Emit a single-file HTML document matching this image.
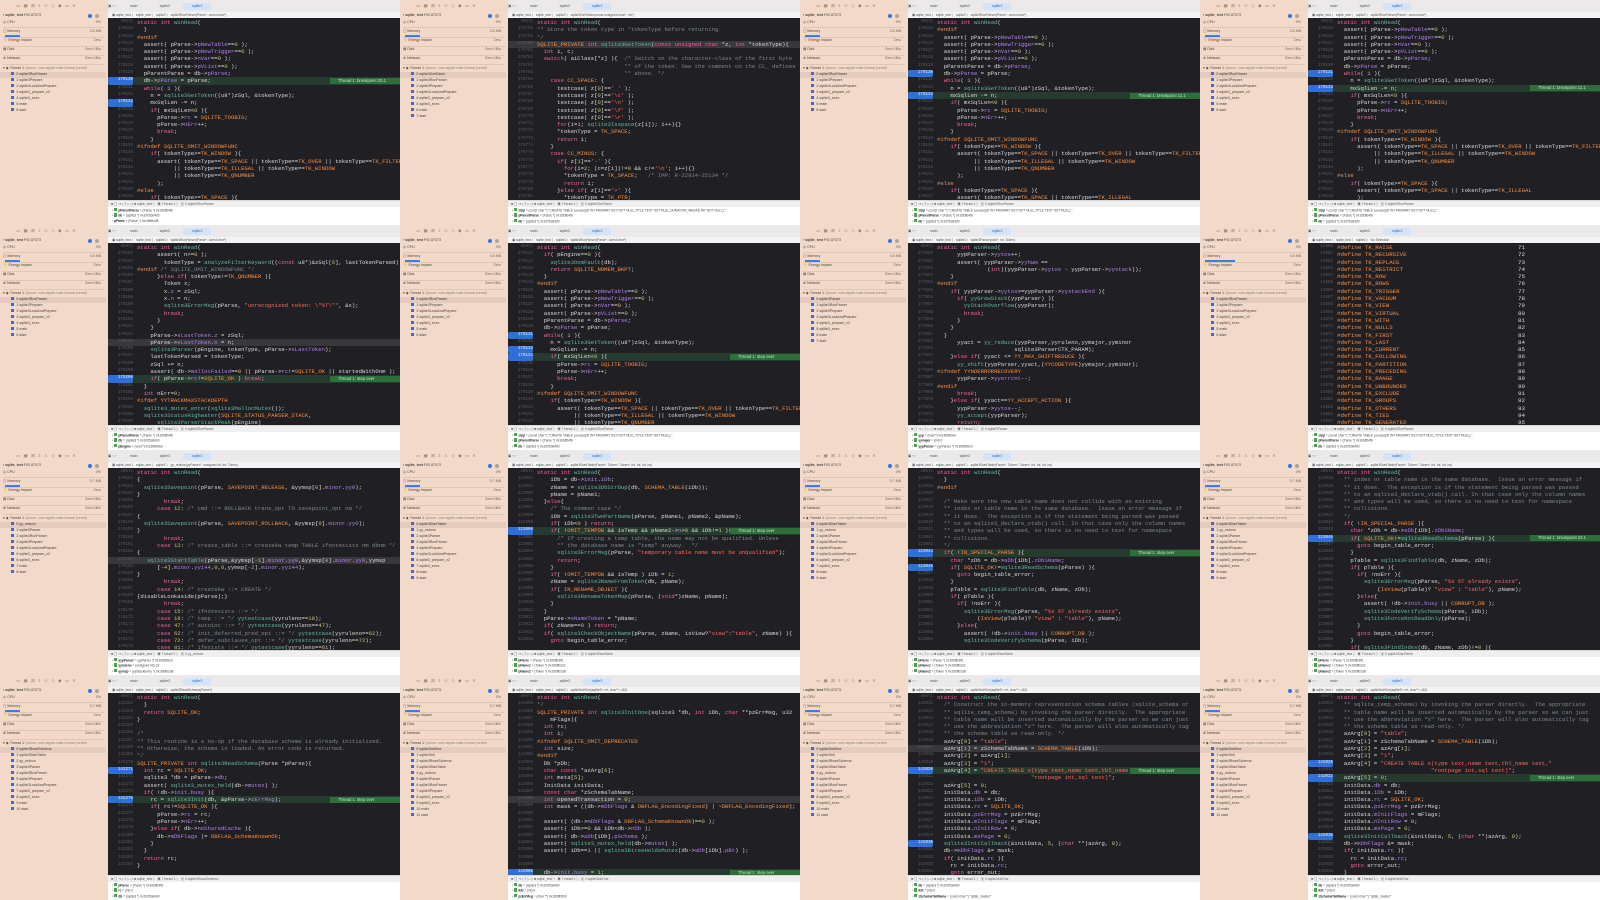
<!DOCTYPE html>
<html><head><meta charset="utf-8"><style>
*{margin:0;padding:0;box-sizing:border-box}
body{width:1600px;height:900px;overflow:hidden;background:#fff;position:relative;font-family:"Liberation Sans",sans-serif}
.t{position:absolute;width:400px;height:225px;overflow:hidden;background:#fff}
.pn{position:absolute;left:0;top:0;width:108px;height:225px;background:#f2d9ca;font:3.6px/5px "Liberation Sans",sans-serif;color:#4a4440}
.ic{position:absolute;left:16px;top:3px;width:76px;font-size:4.4px;color:#8a817c;letter-spacing:3.4px;white-space:nowrap}
.r{position:absolute;left:3px;width:102px;height:6px;white-space:nowrap}
.r span{position:absolute;right:4px;color:#6a625e}
.r em{font-style:normal;color:#8c837e}
.r.rs{background:#e5cbbd;left:0;width:106px;padding-left:11px;color:#3a3430}
.r.rf{padding-left:11px;left:0;color:#4a4440}
.r.rf:before,.r.rs:before{content:"";display:inline-block;width:3.4px;height:3.4px;background:#3a6fd0;margin-right:2px;vertical-align:-0.4px}
.hr{position:absolute;left:3px;width:102px;height:0;border-top:.5px solid #dfc6b8}
.bar{position:absolute;left:5px;top:35px;width:15px;height:2px;background:#3d7de0}
.dot{position:absolute;right:13px;top:1px;width:4px;height:4px;border-radius:50%;background:#3b72d6}
.dot2{position:absolute;right:6px;top:1px;width:4px;height:4px;border-radius:50%;background:#a9a4a2}
.tb{position:absolute;left:108px;top:0;width:292px;height:12px;background:#ebe9e9;font:3.6px/12px "Liberation Sans",sans-serif;color:#555;white-space:nowrap}
.tb i{font-style:normal;display:inline-block;margin-left:4px;padding:0 9px}
.tb .on{background:#d3e3f8;color:#2f6fd0;line-height:7px;border-radius:2px}
.cr{position:absolute;left:108px;top:12px;width:292px;height:6px;background:#f5f4f4;font:3.3px/6px "Liberation Sans",sans-serif;color:#555;padding-left:4px;white-space:nowrap}
.ed{position:absolute;left:108px;top:18px;width:292px;height:182px;background:#1f1f24;font:5.6px/7.3px "Liberation Mono",monospace;color:#dcdcdd;padding-top:1px;overflow:hidden}
.l{height:7.3px;white-space:pre;position:relative}
.l b{display:inline-block;width:25px;text-align:right;color:#5b5b62;font-size:4.2px;margin-right:4px;font-weight:normal;vertical-align:top}
.hl{background:#273a2f}
.sl{background:#37373c}
.hl b,.bp b{background:#2f6fd6;color:#e6efff;border-radius:2px}
.g{position:absolute;left:222px;top:.6px;height:6px;width:90px;background:#2e6e3a;color:#bfe8c6;font:4.2px/6px "Liberation Sans",sans-serif;padding-left:8px}
.k{color:#fc5fa3}.f{color:#67b7a4}.m{color:#fd8f3f}.s{color:#fc6a5d}.n{color:#d0bf69}.c{color:#7d8893}.v{color:#b281eb}
.db{position:absolute;left:108px;top:200px;width:292px;height:7px;background:#efefef;border-top:.5px solid #d8d8d8;font:3.4px/7px "Liberation Sans",sans-serif;color:#666;white-space:nowrap;padding-left:3px}
.co{position:absolute;left:108px;top:207px;width:292px;height:18px;background:#fff;font:3.2px/5px "Liberation Sans",sans-serif;color:#444;padding:1px 0 0 4px;white-space:nowrap}
.co u{text-decoration:none;display:inline-block;width:3.4px;height:3.4px;background:#4ca34c;margin-right:1px}
.co .nm{font-weight:bold;color:#222}
.nr{position:absolute;left:210px;color:#dcdcdd}
</style></head><body>

<!-- ROW 1 -->
<div class="t" style="left:0;top:0">
<div class="pn"><div class="ic">▭▣⊞⌕⚠◇◆▭≡</div>
<div class="r" style="top:13px">▪ <b>sqlite_test</b> PID 87073<i class="dot"></i><i class="dot2"></i></div>
<div class="r" style="top:20px">◎ CPU<span>0%</span></div><div class="hr" style="top:27px"></div>
<div class="r" style="top:29px">▢ Memory<span>3.6 MB</span></div><div class="bar"></div><div class="hr" style="top:37px"></div>
<div class="r" style="top:38px">⚡ Energy Impact<span>Zero</span></div><div class="hr" style="top:46px"></div>
<div class="r" style="top:47px">▤ Disk<span>Zero KB/s</span></div><div class="hr" style="top:55px"></div>
<div class="r" style="top:56px">⊕ Network<span>Zero KB/s</span></div><div class="hr" style="top:64px"></div>
<div class="r" style="top:66px">▾ ◉ Thread 1 <em>Queue: com.apple.main-thread (serial)</em></div>
<div class="r rs" style="top:72px">0 sqlite3RunParser</div><div class="r rf" style="top:78px">1 sqlite3Prepare</div><div class="r rf" style="top:84px">2 sqlite3LockAndPrepare</div><div class="r rf" style="top:90px">3 sqlite3_prepare_v2</div><div class="r rf" style="top:96px">4 sqlite3_exec</div><div class="r rf" style="top:102px">5 main</div><div class="r rf" style="top:108px">6 start</div></div>
<div class="tb">▣ ‹ › <i>main</i><i>sqlite3</i><i class="on">sqlite3</i></div>
<div class="cr">▣ sqlite_test 〉 sqlite_test 〉 sqlite3 〉 sqlite3RunParser(Parse*, const char*)</div>
<div class="ed">
<div class="l"><b>49071</b><span class="k">static int</span> <span class="f">winRead</span>(</div>
<div class="l"><b>179123</b>  }</div>
<div class="l"><b>179124</b><span class="m">#endif</span></div>
<div class="l"><b>179125</b>  assert( pParse-&gt;<span class="v">pNewTable</span>==<span class="n">0</span> );</div>
<div class="l"><b>179126</b>  assert( pParse-&gt;<span class="v">pNewTrigger</span>==<span class="n">0</span> );</div>
<div class="l"><b>179127</b>  assert( pParse-&gt;<span class="v">nVar</span>==<span class="n">0</span> );</div>
<div class="l"><b>179128</b>  assert( pParse-&gt;<span class="v">pVList</span>==<span class="n">0</span> );</div>
<div class="l"><b>179129</b>  pParentParse = db-&gt;<span class="v">pParse</span>;</div>
<div class="l hl"><b>179130</b>  db-&gt;<span class="v">pParse</span> = pParse;<span class="g">Thread 1: breakpoint 20.1</span></div>
<div class="l"><b>179131</b>  <span class="k">while</span>( <span class="n">1</span> ){</div>
<div class="l"><b>179132</b>    n = <span class="f">sqlite3GetToken</span>((u8*)zSql, &amp;tokenType);</div>
<div class="l bp"><b>179133</b>    mxSqlLen -= n;</div>
<div class="l"><b>179134</b>    <span class="k">if</span>( mxSqlLen&lt;<span class="n">0</span> ){</div>
<div class="l"><b>179135</b>      pParse-&gt;<span class="v">rc</span> = <span class="m">SQLITE_TOOBIG</span>;</div>
<div class="l"><b>179136</b>      pParse-&gt;<span class="v">nErr</span>++;</div>
<div class="l"><b>179137</b>      <span class="k">break</span>;</div>
<div class="l"><b>179138</b>    }</div>
<div class="l"><b>179139</b><span class="m">#ifndef SQLITE_OMIT_WINDOWFUNC</span></div>
<div class="l"><b>179140</b>    <span class="k">if</span>( tokenType&gt;=<span class="m">TK_WINDOW</span> ){</div>
<div class="l"><b>179141</b>      assert( tokenType==<span class="m">TK_SPACE</span> || tokenType==<span class="m">TK_OVER</span> || tokenType==<span class="m">TK_FILTER</span></div>
<div class="l"><b>179142</b>           || tokenType==<span class="m">TK_ILLEGAL</span> || tokenType==<span class="m">TK_WINDOW</span></div>
<div class="l"><b>179143</b>           || tokenType==<span class="m">TK_QNUMBER</span></div>
<div class="l"><b>179144</b>      );</div>
<div class="l"><b>179145</b><span class="m">#else</span></div>
<div class="l"><b>179146</b>    <span class="k">if</span>( tokenType&gt;=<span class="m">TK_SPACE</span> ){</div>
</div>
<div class="db">■ ▢ ⇥ ⤓ ⤒ ▷ ◇ ■ sqlite_test 〉 ◉ Thread 1 〉 ▣ 0 sqlite3RunParser</div>
<div class="co">› <u></u><span class="nm">pParentParse</span> = (Parse *) 0x16fdfb4f8<br>› <u></u><span class="nm">db</span> = (sqlite3 *) 0x10053d400<br>› <span class="nm">pParse</span> = (Parse *) 0x16fdfb4f8</div>
</div>

<div class="t" style="left:400px;top:0">
<div class="pn"><div class="ic">▭▣⊞⌕⚠◇◆▭≡</div>
<div class="r" style="top:13px">▪ <b>sqlite_test</b> PID 87073<i class="dot"></i><i class="dot2"></i></div>
<div class="r" style="top:20px">◎ CPU<span>0%</span></div><div class="hr" style="top:27px"></div>
<div class="r" style="top:29px">▢ Memory<span>3.6 MB</span></div><div class="bar"></div><div class="hr" style="top:37px"></div>
<div class="r" style="top:38px">⚡ Energy Impact<span>Zero</span></div><div class="hr" style="top:46px"></div>
<div class="r" style="top:47px">▤ Disk<span>Zero KB/s</span></div><div class="hr" style="top:55px"></div>
<div class="r" style="top:56px">⊕ Network<span>Zero KB/s</span></div><div class="hr" style="top:64px"></div>
<div class="r" style="top:66px">▾ ◉ Thread 1 <em>Queue: com.apple.main-thread (serial)</em></div>
<div class="r rs" style="top:72px">0 sqlite3GetToken</div><div class="r rf" style="top:78px">1 sqlite3RunParser</div><div class="r rf" style="top:84px">2 sqlite3Prepare</div><div class="r rf" style="top:90px">3 sqlite3LockAndPrepare</div><div class="r rf" style="top:96px">4 sqlite3_prepare_v2</div><div class="r rf" style="top:102px">5 sqlite3_exec</div><div class="r rf" style="top:108px">6 main</div><div class="r rf" style="top:114px">7 start</div></div>
<div class="tb">▣ ‹ › <i>main</i><i>sqlite3</i><i class="on">sqlite3</i></div>
<div class="cr">▣ sqlite_test 〉 sqlite_test 〉 sqlite3 〉 sqlite3GetToken(const unsigned char*, int*)</div>
<div class="ed">
<div class="l"><b>49071</b><span class="k">static int</span> <span class="f">winRead</span>(</div>
<div class="l"><b>178758</b><span class="c">** Store the token type in *tokenType before returning.</span></div>
<div class="l"><b>178759</b><span class="c">*/</span></div>
<div class="l sl"><b>178760</b><span class="m">SQLITE_PRIVATE</span> <span class="k">int</span> <span class="f">sqlite3GetToken</span>(<span class="k">const unsigned char</span> *z, <span class="k">int</span> *tokenType){</div>
<div class="l"><b>178761</b>  <span class="k">int</span> i, c;</div>
<div class="l"><b>178762</b>  <span class="k">switch</span>( aiClass[*z] ){  <span class="c">/* Switch on the character-class of the first byte</span></div>
<div class="l"><b>178763</b>                          <span class="c">** of the token. See the comment on the CC_ defines</span></div>
<div class="l"><b>178764</b>                          <span class="c">** above. */</span></div>
<div class="l"><b>178765</b>    <span class="k">case</span> <span class="m">CC_SPACE</span>: {</div>
<div class="l"><b>178766</b>      testcase( z[<span class="n">0</span>]==<span class="s">' '</span> );</div>
<div class="l"><b>178767</b>      testcase( z[<span class="n">0</span>]==<span class="s">'\t'</span> );</div>
<div class="l"><b>178768</b>      testcase( z[<span class="n">0</span>]==<span class="s">'\n'</span> );</div>
<div class="l"><b>178769</b>      testcase( z[<span class="n">0</span>]==<span class="s">'\f'</span> );</div>
<div class="l"><b>178770</b>      testcase( z[<span class="n">0</span>]==<span class="s">'\r'</span> );</div>
<div class="l"><b>178771</b>      <span class="k">for</span>(i=<span class="n">1</span>; <span class="f">sqlite3Isspace</span>(z[i]); i++){}</div>
<div class="l"><b>178772</b>      *tokenType = <span class="m">TK_SPACE</span>;</div>
<div class="l"><b>178773</b>      <span class="k">return</span> i;</div>
<div class="l"><b>178774</b>    }</div>
<div class="l"><b>178775</b>    <span class="k">case</span> <span class="m">CC_MINUS</span>: {</div>
<div class="l"><b>178776</b>      <span class="k">if</span>( z[<span class="n">1</span>]==<span class="s">'-'</span> ){</div>
<div class="l"><b>178777</b>        <span class="k">for</span>(i=<span class="n">2</span>; (c=z[i])!=<span class="n">0</span> &amp;&amp; c!=<span class="s">'\n'</span>; i++){}</div>
<div class="l"><b>178778</b>        *tokenType = <span class="m">TK_SPACE</span>;   <span class="c">/* IMP: R-22934-25134 */</span></div>
<div class="l"><b>178779</b>        <span class="k">return</span> i;</div>
<div class="l"><b>178780</b>      }<span class="k">else if</span>( z[<span class="n">1</span>]==<span class="s">'&gt;'</span> ){</div>
<div class="l"><b>178781</b>        *tokenType = <span class="m">TK_PTR</span>;</div>
</div>
<div class="db">■ ▢ ⇥ ⤓ ⤒ ▷ ◇ ■ sqlite_test 〉 ◉ Thread 1 〉 ▣ 0 sqlite3GetToken</div>
<div class="co">› <u></u><span class="nm">zSql</span> = (const char *) "CREATE TABLE courses(ID INT PRIMARY KEY NOT NULL,TITLE TEXT NOT NULL,DURATION_WEEKS INT NOT NULL);"<br>› <u></u><span class="nm">pParentParse</span> = (Parse *) 0x16fdfb4f8<br>› <u></u><span class="nm">db</span> = (sqlite3 *) 0x10053d400</div>
</div>

<div class="t" style="left:800px;top:0">
<div class="pn"><div class="ic">▭▣⊞⌕⚠◇◆▭≡</div>
<div class="r" style="top:13px">▪ <b>sqlite_test</b> PID 87073<i class="dot"></i><i class="dot2"></i></div>
<div class="r" style="top:20px">◎ CPU<span>0%</span></div><div class="hr" style="top:27px"></div>
<div class="r" style="top:29px">▢ Memory<span>3.6 MB</span></div><div class="bar"></div><div class="hr" style="top:37px"></div>
<div class="r" style="top:38px">⚡ Energy Impact<span>Zero</span></div><div class="hr" style="top:46px"></div>
<div class="r" style="top:47px">▤ Disk<span>Zero KB/s</span></div><div class="hr" style="top:55px"></div>
<div class="r" style="top:56px">⊕ Network<span>Zero KB/s</span></div><div class="hr" style="top:64px"></div>
<div class="r" style="top:66px">▾ ◉ Thread 1 <em>Queue: com.apple.main-thread (serial)</em></div>
<div class="r rs" style="top:72px">0 sqlite3RunParser</div><div class="r rf" style="top:78px">1 sqlite3Prepare</div><div class="r rf" style="top:84px">2 sqlite3LockAndPrepare</div><div class="r rf" style="top:90px">3 sqlite3_prepare_v2</div><div class="r rf" style="top:96px">4 sqlite3_exec</div><div class="r rf" style="top:102px">5 main</div><div class="r rf" style="top:108px">6 start</div></div>
<div class="tb">▣ ‹ › <i>main</i><i>sqlite3</i><i class="on">sqlite3</i></div>
<div class="cr">▣ sqlite_test 〉 sqlite_test 〉 sqlite3 〉 sqlite3RunParser(Parse*, const char*)</div>
<div class="ed">
<div class="l"><b>49071</b><span class="k">static int</span> <span class="f">winRead</span>(</div>
<div class="l"><b>179124</b><span class="m">#endif</span></div>
<div class="l"><b>179125</b>  assert( pParse-&gt;<span class="v">pNewTable</span>==<span class="n">0</span> );</div>
<div class="l"><b>179126</b>  assert( pParse-&gt;<span class="v">pNewTrigger</span>==<span class="n">0</span> );</div>
<div class="l"><b>179127</b>  assert( pParse-&gt;<span class="v">nVar</span>==<span class="n">0</span> );</div>
<div class="l"><b>179128</b>  assert( pParse-&gt;<span class="v">pVList</span>==<span class="n">0</span> );</div>
<div class="l"><b>179129</b>  pParentParse = db-&gt;<span class="v">pParse</span>;</div>
<div class="l bp"><b>179130</b>  db-&gt;<span class="v">pParse</span> = pParse;</div>
<div class="l"><b>179131</b>  <span class="k">while</span>( <span class="n">1</span> ){</div>
<div class="l"><b>179132</b>    n = <span class="f">sqlite3GetToken</span>((u8*)zSql, &amp;tokenType);</div>
<div class="l hl"><b>179133</b>    mxSqlLen -= n;<span class="g">Thread 1: breakpoint 11.1</span></div>
<div class="l"><b>179134</b>    <span class="k">if</span>( mxSqlLen&lt;<span class="n">0</span> ){</div>
<div class="l"><b>179135</b>      pParse-&gt;<span class="v">rc</span> = <span class="m">SQLITE_TOOBIG</span>;</div>
<div class="l"><b>179136</b>      pParse-&gt;<span class="v">nErr</span>++;</div>
<div class="l"><b>179137</b>      <span class="k">break</span>;</div>
<div class="l"><b>179138</b>    }</div>
<div class="l"><b>179139</b><span class="m">#ifndef SQLITE_OMIT_WINDOWFUNC</span></div>
<div class="l"><b>179140</b>    <span class="k">if</span>( tokenType&gt;=<span class="m">TK_WINDOW</span> ){</div>
<div class="l"><b>179141</b>      assert( tokenType==<span class="m">TK_SPACE</span> || tokenType==<span class="m">TK_OVER</span> || tokenType==<span class="m">TK_FILTER</span></div>
<div class="l"><b>179142</b>           || tokenType==<span class="m">TK_ILLEGAL</span> || tokenType==<span class="m">TK_WINDOW</span></div>
<div class="l"><b>179143</b>           || tokenType==<span class="m">TK_QNUMBER</span></div>
<div class="l"><b>179144</b>      );</div>
<div class="l"><b>179145</b><span class="m">#else</span></div>
<div class="l"><b>179146</b>    <span class="k">if</span>( tokenType&gt;=<span class="m">TK_SPACE</span> ){</div>
<div class="l"><b>179147</b>      assert( tokenType==<span class="m">TK_SPACE</span> || tokenType==<span class="m">TK_ILLEGAL</span></div>
</div>
<div class="db">■ ▢ ⇥ ⤓ ⤒ ▷ ◇ ■ sqlite_test 〉 ◉ Thread 1 〉 ▣ 0 sqlite3RunParser</div>
<div class="co">› <u></u><span class="nm">zSql</span> = (const char *) "CREATE TABLE courses(ID INT PRIMARY KEY NOT NULL,TITLE TEXT NOT NULL);"<br>› <u></u><span class="nm">pParentParse</span> = (Parse *) 0x16fdfb4f8<br>› <u></u><span class="nm">db</span> = (sqlite3 *) 0x10053d400</div>
</div>

<div class="t" style="left:1200px;top:0">
<div class="pn"><div class="ic">▭▣⊞⌕⚠◇◆▭≡</div>
<div class="r" style="top:13px">▪ <b>sqlite_test</b> PID 87073<i class="dot"></i><i class="dot2"></i></div>
<div class="r" style="top:20px">◎ CPU<span>0%</span></div><div class="hr" style="top:27px"></div>
<div class="r" style="top:29px">▢ Memory<span>3.6 MB</span></div><div class="bar"></div><div class="hr" style="top:37px"></div>
<div class="r" style="top:38px">⚡ Energy Impact<span>Zero</span></div><div class="hr" style="top:46px"></div>
<div class="r" style="top:47px">▤ Disk<span>Zero KB/s</span></div><div class="hr" style="top:55px"></div>
<div class="r" style="top:56px">⊕ Network<span>Zero KB/s</span></div><div class="hr" style="top:64px"></div>
<div class="r" style="top:66px">▾ ◉ Thread 1 <em>Queue: com.apple.main-thread (serial)</em></div>
<div class="r rs" style="top:72px">0 sqlite3RunParser</div><div class="r rf" style="top:78px">1 sqlite3Prepare</div><div class="r rf" style="top:84px">2 sqlite3LockAndPrepare</div><div class="r rf" style="top:90px">3 sqlite3_prepare_v2</div><div class="r rf" style="top:96px">4 sqlite3_exec</div><div class="r rf" style="top:102px">5 main</div><div class="r rf" style="top:108px">6 start</div></div>
<div class="tb">▣ ‹ › <i>main</i><i>sqlite3</i><i class="on">sqlite3</i></div>
<div class="cr">▣ sqlite_test 〉 sqlite_test 〉 sqlite3 〉 sqlite3RunParser(Parse*, const char*)</div>
<div class="ed">
<div class="l"><b>49071</b><span class="k">static int</span> <span class="f">winRead</span>(</div>
<div class="l"><b>179125</b>  assert( pParse-&gt;<span class="v">pNewTable</span>==<span class="n">0</span> );</div>
<div class="l"><b>179126</b>  assert( pParse-&gt;<span class="v">pNewTrigger</span>==<span class="n">0</span> );</div>
<div class="l"><b>179127</b>  assert( pParse-&gt;<span class="v">nVar</span>==<span class="n">0</span> );</div>
<div class="l"><b>179128</b>  assert( pParse-&gt;<span class="v">pVList</span>==<span class="n">0</span> );</div>
<div class="l"><b>179129</b>  pParentParse = db-&gt;<span class="v">pParse</span>;</div>
<div class="l"><b>179130</b>  db-&gt;<span class="v">pParse</span> = pParse;</div>
<div class="l bp"><b>179131</b>  <span class="k">while</span>( <span class="n">1</span> ){</div>
<div class="l"><b>179132</b>    n = <span class="f">sqlite3GetToken</span>((u8*)zSql, &amp;tokenType);</div>
<div class="l hl"><b>179133</b>    mxSqlLen -= n;<span class="g">Thread 1: breakpoint 11.1</span></div>
<div class="l"><b>179134</b>    <span class="k">if</span>( mxSqlLen&lt;<span class="n">0</span> ){</div>
<div class="l"><b>179135</b>      pParse-&gt;<span class="v">rc</span> = <span class="m">SQLITE_TOOBIG</span>;</div>
<div class="l"><b>179136</b>      pParse-&gt;<span class="v">nErr</span>++;</div>
<div class="l"><b>179137</b>      <span class="k">break</span>;</div>
<div class="l"><b>179138</b>    }</div>
<div class="l"><b>179139</b><span class="m">#ifndef SQLITE_OMIT_WINDOWFUNC</span></div>
<div class="l"><b>179140</b>    <span class="k">if</span>( tokenType&gt;=<span class="m">TK_WINDOW</span> ){</div>
<div class="l"><b>179141</b>      assert( tokenType==<span class="m">TK_SPACE</span> || tokenType==<span class="m">TK_OVER</span> || tokenType==<span class="m">TK_FILTER</span></div>
<div class="l"><b>179142</b>           || tokenType==<span class="m">TK_ILLEGAL</span> || tokenType==<span class="m">TK_WINDOW</span></div>
<div class="l"><b>179143</b>           || tokenType==<span class="m">TK_QNUMBER</span></div>
<div class="l"><b>179144</b>      );</div>
<div class="l"><b>179145</b><span class="m">#else</span></div>
<div class="l"><b>179146</b>    <span class="k">if</span>( tokenType&gt;=<span class="m">TK_SPACE</span> ){</div>
<div class="l"><b>179147</b>      assert( tokenType==<span class="m">TK_SPACE</span> || tokenType==<span class="m">TK_ILLEGAL</span></div>
<div class="l"><b>179148</b>      );</div>
</div>
<div class="db">■ ▢ ⇥ ⤓ ⤒ ▷ ◇ ■ sqlite_test 〉 ◉ Thread 1 〉 ▣ 0 sqlite3RunParser</div>
<div class="co">› <u></u><span class="nm">zSql</span> = (const char *) "CREATE TABLE courses(ID INT PRIMARY KEY NOT NULL);"<br>› <u></u><span class="nm">pParentParse</span> = (Parse *) 0x16fdfb4f8<br>› <u></u><span class="nm">db</span> = (sqlite3 *) 0x10053d400</div>
</div>

<!-- ROW 2 -->
<div class="t" style="left:0;top:225px">
<div class="pn"><div class="ic">▭▣⊞⌕⚠◇◆▭≡</div>
<div class="r" style="top:13px">▪ <b>sqlite_test</b> PID 87073<i class="dot"></i><i class="dot2"></i></div>
<div class="r" style="top:20px">◎ CPU<span>0%</span></div><div class="hr" style="top:27px"></div>
<div class="r" style="top:29px">▢ Memory<span>3.6 MB</span></div><div class="bar"></div><div class="hr" style="top:37px"></div>
<div class="r" style="top:38px">⚡ Energy Impact<span>Zero</span></div><div class="hr" style="top:46px"></div>
<div class="r" style="top:47px">▤ Disk<span>Zero KB/s</span></div><div class="hr" style="top:55px"></div>
<div class="r" style="top:56px">⊕ Network<span>Zero KB/s</span></div><div class="hr" style="top:64px"></div>
<div class="r" style="top:66px">▾ ◉ Thread 1 <em>Queue: com.apple.main-thread (serial)</em></div>
<div class="r rs" style="top:72px">0 sqlite3RunParser</div><div class="r rf" style="top:78px">1 sqlite3Prepare</div><div class="r rf" style="top:84px">2 sqlite3LockAndPrepare</div><div class="r rf" style="top:90px">3 sqlite3_prepare_v2</div><div class="r rf" style="top:96px">4 sqlite3_exec</div><div class="r rf" style="top:102px">5 main</div><div class="r rf" style="top:108px">6 start</div></div>
<div class="tb">▣ ‹ › <i>main</i><i>sqlite3</i><i class="on">sqlite3</i></div>
<div class="cr">▣ sqlite_test 〉 sqlite_test 〉 sqlite3 〉 sqlite3RunParser(Parse*, const char*)</div>
<div class="ed">
<div class="l"><b>49071</b><span class="k">static int</span> <span class="f">winRead</span>(</div>
<div class="l"><b>179183</b>      assert( n&gt;=<span class="n">0</span> );</div>
<div class="l"><b>179184</b>        tokenType = <span class="f">analyzeFilterKeyword</span>((<span class="k">const</span> u8*)&amp;zSql[<span class="n">6</span>], lastTokenParsed);</div>
<div class="l"><b>179185</b><span class="m">#endif</span> <span class="c">/* SQLITE_OMIT_WINDOWFUNC */</span></div>
<div class="l"><b>179186</b>      }<span class="k">else if</span>( tokenType!=<span class="m">TK_QNUMBER</span> ){</div>
<div class="l"><b>179187</b>        Token x;</div>
<div class="l"><b>179188</b>        x.<span class="v">z</span> = zSql;</div>
<div class="l"><b>179189</b>        x.<span class="v">n</span> = n;</div>
<div class="l"><b>179190</b>        <span class="f">sqlite3ErrorMsg</span>(pParse, <span class="s">"unrecognized token: \"%T\""</span>, &amp;x);</div>
<div class="l"><b>179191</b>        <span class="k">break</span>;</div>
<div class="l"><b>179192</b>      }</div>
<div class="l"><b>179193</b>    }</div>
<div class="l"><b>179194</b>    pParse-&gt;<span class="v">sLastToken</span>.<span class="v">z</span> = zSql;</div>
<div class="l sl"><b>179195</b>    pParse-&gt;<span class="v">sLastToken</span>.<span class="v">n</span> = n;</div>
<div class="l"><b>179196</b>    <span class="f">sqlite3Parser</span>(pEngine, tokenType, pParse-&gt;<span class="v">sLastToken</span>);</div>
<div class="l"><b>179197</b>    lastTokenParsed = tokenType;</div>
<div class="l"><b>179198</b>    zSql += n;</div>
<div class="l"><b>179199</b>    assert( db-&gt;<span class="v">mallocFailed</span>==<span class="n">0</span> || pParse-&gt;<span class="v">rc</span>!=<span class="m">SQLITE_OK</span> || startedWithOom );</div>
<div class="l hl"><b>179200</b>    <span class="k">if</span>( pParse-&gt;<span class="v">rc</span>!=<span class="m">SQLITE_OK</span> ) <span class="k">break</span>;<span class="g">Thread 1: step over</span></div>
<div class="l"><b>179201</b>  }</div>
<div class="l"><b>179202</b>  <span class="k">int</span> nErr=<span class="n">0</span>;</div>
<div class="l"><b>179203</b><span class="m">#ifdef YYTRACKMAXSTACKDEPTH</span></div>
<div class="l"><b>179204</b>  <span class="f">sqlite3_mutex_enter</span>(<span class="f">sqlite3MallocMutex</span>());</div>
<div class="l"><b>179205</b>  <span class="f">sqlite3StatusHighwater</span>(<span class="m">SQLITE_STATUS_PARSER_STACK</span>,</div>
<div class="l"><b>179206</b>      <span class="f">sqlite3ParserStackPeak</span>(pEngine)</div>
</div>
<div class="db">■ ▢ ⇥ ⤓ ⤒ ▷ ◇ ■ sqlite_test 〉 ◉ Thread 1 〉 ▣ 0 sqlite3RunParser</div>
<div class="co">› <u></u><span class="nm">pParentParse</span> = (Parse *) 0x16fdfb4f8<br>› <u></u><span class="nm">db</span> = (sqlite3 *) 0x10053d400<br>› <u></u><span class="nm">pEngine</span> = (void *) 0x16fdfb0e0</div>
</div>

<div class="t" style="left:400px;top:225px">
<div class="pn"><div class="ic">▭▣⊞⌕⚠◇◆▭≡</div>
<div class="r" style="top:13px">▪ <b>sqlite_test</b> PID 87073<i class="dot"></i><i class="dot2"></i></div>
<div class="r" style="top:20px">◎ CPU<span>0%</span></div><div class="hr" style="top:27px"></div>
<div class="r" style="top:29px">▢ Memory<span>3.6 MB</span></div><div class="bar"></div><div class="hr" style="top:37px"></div>
<div class="r" style="top:38px">⚡ Energy Impact<span>Zero</span></div><div class="hr" style="top:46px"></div>
<div class="r" style="top:47px">▤ Disk<span>Zero KB/s</span></div><div class="hr" style="top:55px"></div>
<div class="r" style="top:56px">⊕ Network<span>Zero KB/s</span></div><div class="hr" style="top:64px"></div>
<div class="r" style="top:66px">▾ ◉ Thread 1 <em>Queue: com.apple.main-thread (serial)</em></div>
<div class="r rs" style="top:72px">0 sqlite3RunParser</div><div class="r rf" style="top:78px">1 sqlite3Prepare</div><div class="r rf" style="top:84px">2 sqlite3LockAndPrepare</div><div class="r rf" style="top:90px">3 sqlite3_prepare_v2</div><div class="r rf" style="top:96px">4 sqlite3_exec</div><div class="r rf" style="top:102px">5 main</div><div class="r rf" style="top:108px">6 start</div></div>
<div class="tb">▣ ‹ › <i>main</i><i>sqlite3</i><i class="on">sqlite3</i></div>
<div class="cr">▣ sqlite_test 〉 sqlite_test 〉 sqlite3 〉 sqlite3RunParser(Parse*, const char*)</div>
<div class="ed">
<div class="l"><b>49071</b><span class="k">static int</span> <span class="f">winRead</span>(</div>
<div class="l"><b>179112</b>  <span class="k">if</span>( pEngine==<span class="n">0</span> ){</div>
<div class="l"><b>179113</b>    <span class="f">sqlite3OomFault</span>(db);</div>
<div class="l"><b>179114</b>    <span class="k">return</span> <span class="m">SQLITE_NOMEM_BKPT</span>;</div>
<div class="l"><b>179115</b>  }</div>
<div class="l"><b>179116</b><span class="m">#endif</span></div>
<div class="l"><b>179125</b>  assert( pParse-&gt;<span class="v">pNewTable</span>==<span class="n">0</span> );</div>
<div class="l"><b>179126</b>  assert( pParse-&gt;<span class="v">pNewTrigger</span>==<span class="n">0</span> );</div>
<div class="l"><b>179127</b>  assert( pParse-&gt;<span class="v">nVar</span>==<span class="n">0</span> );</div>
<div class="l"><b>179128</b>  assert( pParse-&gt;<span class="v">pVList</span>==<span class="n">0</span> );</div>
<div class="l"><b>179129</b>  pParentParse = db-&gt;<span class="v">pParse</span>;</div>
<div class="l"><b>179130</b>  db-&gt;<span class="v">pParse</span> = pParse;</div>
<div class="l bp"><b>179131</b>  <span class="k">while</span>( <span class="n">1</span> ){</div>
<div class="l"><b>179132</b>    n = <span class="f">sqlite3GetToken</span>((u8*)zSql, &amp;tokenType);</div>
<div class="l bp"><b>179133</b>    mxSqlLen -= n;</div>
<div class="l hl"><b>179134</b>    <span class="k">if</span>( mxSqlLen&lt;<span class="n">0</span> ){<span class="g">Thread 1: step over</span></div>
<div class="l"><b>179135</b>      pParse-&gt;<span class="v">rc</span> = <span class="m">SQLITE_TOOBIG</span>;</div>
<div class="l"><b>179136</b>      pParse-&gt;<span class="v">nErr</span>++;</div>
<div class="l"><b>179137</b>      <span class="k">break</span>;</div>
<div class="l"><b>179138</b>    }</div>
<div class="l"><b>179139</b><span class="m">#ifndef SQLITE_OMIT_WINDOWFUNC</span></div>
<div class="l"><b>179140</b>    <span class="k">if</span>( tokenType&gt;=<span class="m">TK_WINDOW</span> ){</div>
<div class="l"><b>179141</b>      assert( tokenType==<span class="m">TK_SPACE</span> || tokenType==<span class="m">TK_OVER</span> || tokenType==<span class="m">TK_FILTER</span></div>
<div class="l"><b>179142</b>           || tokenType==<span class="m">TK_ILLEGAL</span> || tokenType==<span class="m">TK_WINDOW</span></div>
<div class="l"><b>179143</b>           || tokenType==<span class="m">TK_QNUMBER</span></div>
</div>
<div class="db">■ ▢ ⇥ ⤓ ⤒ ▷ ◇ ■ sqlite_test 〉 ◉ Thread 1 〉 ▣ 0 sqlite3RunParser</div>
<div class="co">› <u></u><span class="nm">zSql</span> = (const char *) "CREATE TABLE courses(ID INT PRIMARY KEY NOT NULL,TITLE TEXT NOT NULL);"<br>› <u></u><span class="nm">pParentParse</span> = (Parse *) 0x16fdfb4f8<br>› <u></u><span class="nm">db</span> = (sqlite3 *) 0x10053d400</div>
</div>

<div class="t" style="left:800px;top:225px">
<div class="pn"><div class="ic">▭▣⊞⌕⚠◇◆▭≡</div>
<div class="r" style="top:13px">▪ <b>sqlite_test</b> PID 87073<i class="dot"></i><i class="dot2"></i></div>
<div class="r" style="top:20px">◎ CPU<span>0%</span></div><div class="hr" style="top:27px"></div>
<div class="r" style="top:29px">▢ Memory<span>3.6 MB</span></div><div class="bar"></div><div class="hr" style="top:37px"></div>
<div class="r" style="top:38px">⚡ Energy Impact<span>Zero</span></div><div class="hr" style="top:46px"></div>
<div class="r" style="top:47px">▤ Disk<span>Zero KB/s</span></div><div class="hr" style="top:55px"></div>
<div class="r" style="top:56px">⊕ Network<span>Zero KB/s</span></div><div class="hr" style="top:64px"></div>
<div class="r" style="top:66px">▾ ◉ Thread 1 <em>Queue: com.apple.main-thread (serial)</em></div>
<div class="r rs" style="top:72px">0 sqlite3Parser</div><div class="r rf" style="top:78px">1 sqlite3RunParser</div><div class="r rf" style="top:84px">2 sqlite3Prepare</div><div class="r rf" style="top:90px">3 sqlite3LockAndPrepare</div><div class="r rf" style="top:96px">4 sqlite3_prepare_v2</div><div class="r rf" style="top:102px">5 sqlite3_exec</div><div class="r rf" style="top:108px">6 main</div><div class="r rf" style="top:114px">7 start</div></div>
<div class="tb">▣ ‹ › <i>main</i><i>sqlite3</i><i class="on">sqlite3</i></div>
<div class="cr">▣ sqlite_test 〉 sqlite_test 〉 sqlite3 〉 sqlite3Parser(void*, int, Token)</div>
<div class="ed">
<div class="l"><b>49071</b><span class="k">static int</span> <span class="f">winRead</span>(</div>
<div class="l"><b>177850</b>      yypParser-&gt;<span class="v">yytos</span>++;</div>
<div class="l"><b>177851</b>      assert( yypParser-&gt;<span class="v">yyhwm</span> ==</div>
<div class="l"><b>177852</b>               (<span class="k">int</span>)(yypParser-&gt;<span class="v">yytos</span> - yypParser-&gt;<span class="v">yystack</span>));</div>
<div class="l"><b>177853</b>    }</div>
<div class="l"><b>177854</b><span class="m">#endif</span></div>
<div class="l"><b>177855</b>    <span class="k">if</span>( yypParser-&gt;<span class="v">yytos</span>&gt;=yypParser-&gt;<span class="v">yystackEnd</span> ){</div>
<div class="l"><b>177856</b>      <span class="k">if</span>( <span class="f">yyGrowStack</span>(yypParser) ){</div>
<div class="l"><b>177857</b>        <span class="f">yyStackOverflow</span>(yypParser);</div>
<div class="l"><b>177858</b>        <span class="k">break</span>;</div>
<div class="l"><b>177859</b>      }</div>
<div class="l"><b>177860</b>    }</div>
<div class="l"><b>177861</b>  }</div>
<div class="l"><b>177862</b>      yyact = <span class="f">yy_reduce</span>(yypParser,yyruleno,yymajor,yyminor</div>
<div class="l"><b>177863</b>                       sqlite3ParserCTX_PARAM);</div>
<div class="l"><b>177864</b>    }<span class="k">else if</span>( yyact &lt;= <span class="m">YY_MAX_SHIFTREDUCE</span> ){</div>
<div class="l"><b>177865</b>      <span class="f">yy_shift</span>(yypParser,yyact,(<span class="m">YYCODETYPE</span>)yymajor,yyminor);</div>
<div class="l"><b>177866</b><span class="m">#ifndef YYNOERRORRECOVERY</span></div>
<div class="l"><b>177867</b>      yypParser-&gt;<span class="v">yyerrcnt</span>--;</div>
<div class="l"><b>177868</b><span class="m">#endif</span></div>
<div class="l"><b>177869</b>      <span class="k">break</span>;</div>
<div class="l"><b>177870</b>    }<span class="k">else if</span>( yyact==<span class="m">YY_ACCEPT_ACTION</span> ){</div>
<div class="l"><b>177871</b>      yypParser-&gt;<span class="v">yytos</span>--;</div>
<div class="l"><b>177872</b>      <span class="f">yy_accept</span>(yypParser);</div>
<div class="l"><b>177873</b>      <span class="k">return</span>;</div>
</div>
<div class="db">■ ▢ ⇥ ⤓ ⤒ ▷ ◇ ■ sqlite_test 〉 ◉ Thread 1 〉 ▣ 0 sqlite3Parser</div>
<div class="co">› <u></u><span class="nm">yyp</span> = (void *) 0x16fdfb0e0<br>› <u></u><span class="nm">yymajor</span> = (int) 0<br>› <u></u><span class="nm">yypParser</span> = (yyParser *) 0x16fdfb0e0</div>
</div>

<div class="t" style="left:1200px;top:225px">
<div class="pn"><div class="ic">▭▣⊞⌕⚠◇◆▭≡</div>
<div class="r" style="top:13px">▪ <b>sqlite_test</b> PID 87073<i class="dot"></i><i class="dot2"></i></div>
<div class="r" style="top:20px">◎ CPU<span>0%</span></div><div class="hr" style="top:27px"></div>
<div class="r" style="top:29px">▢ Memory<span>3.6 MB</span></div><div class="bar" style="width:30px"></div><div class="hr" style="top:37px"></div>
<div class="r" style="top:38px">⚡ Energy Impact<span>Zero</span></div><div class="hr" style="top:46px"></div>
<div class="r" style="top:47px">▤ Disk<span>Zero KB/s</span></div><div class="hr" style="top:55px"></div>
<div class="r" style="top:56px">⊕ Network<span>Zero KB/s</span></div><div class="hr" style="top:64px"></div>
<div class="r" style="top:66px">▾ ◉ Thread 1 <em>Queue: com.apple.main-thread (serial)</em></div>
<div class="r rs" style="top:72px">0 sqlite3RunParser</div><div class="r rf" style="top:78px">1 sqlite3Prepare</div><div class="r rf" style="top:84px">2 sqlite3LockAndPrepare</div><div class="r rf" style="top:90px">3 sqlite3_prepare_v2</div><div class="r rf" style="top:96px">4 sqlite3_exec</div><div class="r rf" style="top:102px">5 main</div><div class="r rf" style="top:108px">6 start</div></div>
<div class="tb">▣ ‹ › <i>main</i><i>sqlite3</i><i class="on">sqlite3</i></div>
<div class="cr">▣ sqlite_test 〉 sqlite_test 〉 sqlite3 〉 No Selection</div>
<div class="ed" style="font-size:5.8px">
<div class="l"><b>14660</b><span class="m">#define</span> <span class="m">TK_RAISE</span><span class="nr n">71</span></div>
<div class="l"><b>14661</b><span class="m">#define</span> <span class="m">TK_RECURSIVE</span><span class="nr n">72</span></div>
<div class="l"><b>14662</b><span class="m">#define</span> <span class="m">TK_REPLACE</span><span class="nr n">73</span></div>
<div class="l"><b>14663</b><span class="m">#define</span> <span class="m">TK_RESTRICT</span><span class="nr n">74</span></div>
<div class="l"><b>14664</b><span class="m">#define</span> <span class="m">TK_ROW</span><span class="nr n">75</span></div>
<div class="l"><b>14665</b><span class="m">#define</span> <span class="m">TK_ROWS</span><span class="nr n">76</span></div>
<div class="l"><b>14666</b><span class="m">#define</span> <span class="m">TK_TRIGGER</span><span class="nr n">77</span></div>
<div class="l"><b>14667</b><span class="m">#define</span> <span class="m">TK_VACUUM</span><span class="nr n">78</span></div>
<div class="l"><b>14668</b><span class="m">#define</span> <span class="m">TK_VIEW</span><span class="nr n">79</span></div>
<div class="l"><b>14669</b><span class="m">#define</span> <span class="m">TK_VIRTUAL</span><span class="nr n">80</span></div>
<div class="l"><b>14670</b><span class="m">#define</span> <span class="m">TK_WITH</span><span class="nr n">81</span></div>
<div class="l"><b>14671</b><span class="m">#define</span> <span class="m">TK_NULLS</span><span class="nr n">82</span></div>
<div class="l"><b>14672</b><span class="m">#define</span> <span class="m">TK_FIRST</span><span class="nr n">83</span></div>
<div class="l"><b>14673</b><span class="m">#define</span> <span class="m">TK_LAST</span><span class="nr n">84</span></div>
<div class="l"><b>14674</b><span class="m">#define</span> <span class="m">TK_CURRENT</span><span class="nr n">85</span></div>
<div class="l"><b>14675</b><span class="m">#define</span> <span class="m">TK_FOLLOWING</span><span class="nr n">86</span></div>
<div class="l"><b>14676</b><span class="m">#define</span> <span class="m">TK_PARTITION</span><span class="nr n">87</span></div>
<div class="l"><b>14677</b><span class="m">#define</span> <span class="m">TK_PRECEDING</span><span class="nr n">88</span></div>
<div class="l"><b>14678</b><span class="m">#define</span> <span class="m">TK_RANGE</span><span class="nr n">89</span></div>
<div class="l"><b>14679</b><span class="m">#define</span> <span class="m">TK_UNBOUNDED</span><span class="nr n">90</span></div>
<div class="l"><b>14680</b><span class="m">#define</span> <span class="m">TK_EXCLUDE</span><span class="nr n">91</span></div>
<div class="l"><b>14681</b><span class="m">#define</span> <span class="m">TK_GROUPS</span><span class="nr n">92</span></div>
<div class="l"><b>14682</b><span class="m">#define</span> <span class="m">TK_OTHERS</span><span class="nr n">93</span></div>
<div class="l"><b>14683</b><span class="m">#define</span> <span class="m">TK_TIES</span><span class="nr n">94</span></div>
<div class="l"><b>14684</b><span class="m">#define</span> <span class="m">TK_GENERATED</span><span class="nr n">95</span></div>
</div>
<div class="db">■ ▢ ⇥ ⤓ ⤒ ▷ ◇ ■ sqlite_test 〉 ◉ Thread 1 〉 ▣ 0 sqlite3RunParser</div>
<div class="co">› <u></u><span class="nm">zSql</span> = (const char *) "CREATE TABLE courses(ID INT PRIMARY KEY NOT NULL,TITLE TEXT NOT NULL);"<br>› <u></u><span class="nm">pParentParse</span> = (Parse *) 0x16fdfb4f8<br>› <u></u><span class="nm">db</span> = (sqlite3 *) 0x10053d400</div>
</div>

<!-- ROW 3 -->
<div class="t" style="left:0;top:450px">
<div class="pn"><div class="ic">▭▣⊞⌕⚠◇◆▭≡</div>
<div class="r" style="top:13px">▪ <b>sqlite_test</b> PID 87073<i class="dot"></i><i class="dot2"></i></div>
<div class="r" style="top:20px">◎ CPU<span>0%</span></div><div class="hr" style="top:27px"></div>
<div class="r" style="top:29px">▢ Memory<span>3.7 MB</span></div><div class="bar"></div><div class="hr" style="top:37px"></div>
<div class="r" style="top:38px">⚡ Energy Impact<span>Zero</span></div><div class="hr" style="top:46px"></div>
<div class="r" style="top:47px">▤ Disk<span>Zero KB/s</span></div><div class="hr" style="top:55px"></div>
<div class="r" style="top:56px">⊕ Network<span>Zero KB/s</span></div><div class="hr" style="top:64px"></div>
<div class="r" style="top:66px">▾ ◉ Thread 1 <em>Queue: com.apple.main-thread (serial)</em></div>
<div class="r rs" style="top:72px">0 yy_reduce</div><div class="r rf" style="top:78px">1 sqlite3Parser</div><div class="r rf" style="top:84px">2 sqlite3RunParser</div><div class="r rf" style="top:90px">3 sqlite3Prepare</div><div class="r rf" style="top:96px">4 sqlite3LockAndPrepare</div><div class="r rf" style="top:102px">5 sqlite3_prepare_v2</div><div class="r rf" style="top:108px">6 sqlite3_exec</div><div class="r rf" style="top:114px">7 main</div><div class="r rf" style="top:120px">8 start</div></div>
<div class="tb">▣ ‹ › <i>main</i><i>sqlite3</i><i class="on">sqlite3</i></div>
<div class="cr">▣ sqlite_test 〉 sqlite_test 〉 sqlite3 〉 yy_reduce(yyParser*, unsigned int, int, Token)</div>
<div class="ed">
<div class="l"><b>49071</b><span class="k">static int</span> <span class="f">winRead</span>(</div>
<div class="l"><b>176152</b>{</div>
<div class="l"><b>176153</b>  <span class="f">sqlite3Savepoint</span>(pParse, <span class="m">SAVEPOINT_RELEASE</span>, &amp;yymsp[<span class="n">0</span>].<span class="v">minor</span>.<span class="v">yy0</span>);</div>
<div class="l"><b>176154</b>}</div>
<div class="l"><b>176155</b>        <span class="k">break</span>;</div>
<div class="l"><b>176156</b>      <span class="k">case</span> <span class="n">12</span>: <span class="c">/* cmd ::= ROLLBACK trans_opt TO savepoint_opt nm */</span></div>
<div class="l"><b>176157</b>{</div>
<div class="l"><b>176158</b>  <span class="f">sqlite3Savepoint</span>(pParse, <span class="m">SAVEPOINT_ROLLBACK</span>, &amp;yymsp[<span class="n">0</span>].<span class="v">minor</span>.<span class="v">yy0</span>);</div>
<div class="l"><b>176159</b>}</div>
<div class="l"><b>176160</b>        <span class="k">break</span>;</div>
<div class="l"><b>176161</b>      <span class="k">case</span> <span class="n">13</span>: <span class="c">/* create_table ::= createkw temp TABLE ifnotexists nm dbnm */</span></div>
<div class="l"><b>176162</b>{</div>
<div class="l sl"><b>176163</b>   <span class="f">sqlite3StartTable</span>(pParse,&amp;yymsp[<span class="n">-1</span>].<span class="v">minor</span>.<span class="v">yy0</span>,&amp;yymsp[<span class="n">0</span>].<span class="v">minor</span>.<span class="v">yy0</span>,yymsp</div>
<div class="l"><b>176164</b>      [<span class="n">-4</span>].<span class="v">minor</span>.<span class="v">yy144</span>,<span class="n">0</span>,<span class="n">0</span>,yymsp[<span class="n">-2</span>].<span class="v">minor</span>.<span class="v">yy144</span>);</div>
<div class="l"><b>176165</b>}</div>
<div class="l"><b>176166</b>        <span class="k">break</span>;</div>
<div class="l"><b>176167</b>      <span class="k">case</span> <span class="n">14</span>: <span class="c">/* createkw ::= CREATE */</span></div>
<div class="l"><b>176168</b>{disableLookaside(pParse);}</div>
<div class="l"><b>176169</b>        <span class="k">break</span>;</div>
<div class="l"><b>176170</b>      <span class="k">case</span> <span class="n">15</span>: <span class="c">/* ifnotexists ::= */</span></div>
<div class="l"><b>176171</b>      <span class="k">case</span> <span class="n">18</span>: <span class="c">/* temp ::= */</span> <span class="f">yytestcase</span>(yyruleno==<span class="n">18</span>);</div>
<div class="l"><b>176172</b>      <span class="k">case</span> <span class="n">47</span>: <span class="c">/* autoinc ::= */</span> <span class="f">yytestcase</span>(yyruleno==<span class="n">47</span>);</div>
<div class="l"><b>176173</b>      <span class="k">case</span> <span class="n">62</span>: <span class="c">/* init_deferred_pred_opt ::= */</span> <span class="f">yytestcase</span>(yyruleno==<span class="n">62</span>);</div>
<div class="l"><b>176174</b>      <span class="k">case</span> <span class="n">72</span>: <span class="c">/* defer_subclause_opt ::= */</span> <span class="f">yytestcase</span>(yyruleno==<span class="n">72</span>);</div>
<div class="l"><b>176175</b>      <span class="k">case</span> <span class="n">81</span>: <span class="c">/* ifexists ::= */</span> <span class="f">yytestcase</span>(yyruleno==<span class="n">81</span>);</div>
</div>
<div class="db">■ ▢ ⇥ ⤓ ⤒ ▷ ◇ ■ sqlite_test 〉 ◉ Thread 1 〉 ▣ 0 yy_reduce</div>
<div class="co">› <u></u><span class="nm">yypParser</span> = (yyParser *) 0x16fdfb0e0<br>› <u></u><span class="nm">yyruleno</span> = (unsigned int) 13<br>› <u></u><span class="nm">yymsp</span> = (yyStackEntry *) 0x16fdfb2a8</div>
</div>

<div class="t" style="left:400px;top:450px">
<div class="pn"><div class="ic">▭▣⊞⌕⚠◇◆▭≡</div>
<div class="r" style="top:13px">▪ <b>sqlite_test</b> PID 87073<i class="dot"></i><i class="dot2"></i></div>
<div class="r" style="top:20px">◎ CPU<span>0%</span></div><div class="hr" style="top:27px"></div>
<div class="r" style="top:29px">▢ Memory<span>3.7 MB</span></div><div class="bar"></div><div class="hr" style="top:37px"></div>
<div class="r" style="top:38px">⚡ Energy Impact<span>Zero</span></div><div class="hr" style="top:46px"></div>
<div class="r" style="top:47px">▤ Disk<span>Zero KB/s</span></div><div class="hr" style="top:55px"></div>
<div class="r" style="top:56px">⊕ Network<span>Zero KB/s</span></div><div class="hr" style="top:64px"></div>
<div class="r" style="top:66px">▾ ◉ Thread 1 <em>Queue: com.apple.main-thread (serial)</em></div>
<div class="r rs" style="top:72px">0 sqlite3StartTable</div><div class="r rf" style="top:78px">1 yy_reduce</div><div class="r rf" style="top:84px">2 sqlite3Parser</div><div class="r rf" style="top:90px">3 sqlite3RunParser</div><div class="r rf" style="top:96px">4 sqlite3Prepare</div><div class="r rf" style="top:102px">5 sqlite3LockAndPrepare</div><div class="r rf" style="top:108px">6 sqlite3_prepare_v2</div><div class="r rf" style="top:114px">7 sqlite3_exec</div><div class="r rf" style="top:120px">8 main</div><div class="r rf" style="top:126px">9 start</div></div>
<div class="tb">▣ ‹ › <i>main</i><i>sqlite3</i><i class="on">sqlite3</i></div>
<div class="cr">▣ sqlite_test 〉 sqlite_test 〉 sqlite3 〉 sqlite3StartTable(Parse*, Token*, Token*, int, int, int, int)</div>
<div class="ed">
<div class="l"><b>49071</b><span class="k">static int</span> <span class="f">winRead</span>(</div>
<div class="l"><b>122993</b>    iDb = db-&gt;<span class="v">init</span>.<span class="v">iDb</span>;</div>
<div class="l"><b>122994</b>    zName = <span class="f">sqlite3DbStrDup</span>(db, <span class="m">SCHEMA_TABLE</span>(iDb));</div>
<div class="l"><b>122995</b>    pName = pName1;</div>
<div class="l"><b>122996</b>  }<span class="k">else</span>{</div>
<div class="l"><b>122997</b>    <span class="c">/* The common case */</span></div>
<div class="l"><b>122998</b>    iDb = <span class="f">sqlite3TwoPartName</span>(pParse, pName1, pName2, &amp;pName);</div>
<div class="l"><b>122999</b>    <span class="k">if</span>( iDb&lt;<span class="n">0</span> ) <span class="k">return</span>;</div>
<div class="l hl"><b>123000</b>    <span class="k">if</span>( !<span class="m">OMIT_TEMPDB</span> &amp;&amp; isTemp &amp;&amp; pName2-&gt;<span class="v">n</span>&gt;<span class="n">0</span> &amp;&amp; iDb!=<span class="n">1</span> ){<span class="g">Thread 1: step over</span></div>
<div class="l"><b>123001</b>      <span class="c">/* If creating a temp table, the name may not be qualified. Unless</span></div>
<div class="l"><b>123002</b>      <span class="c">** the database name is "temp" anyway.  */</span></div>
<div class="l"><b>123003</b>      <span class="f">sqlite3ErrorMsg</span>(pParse, <span class="s">"temporary table name must be unqualified"</span>);</div>
<div class="l"><b>123004</b>      <span class="k">return</span>;</div>
<div class="l"><b>123005</b>    }</div>
<div class="l"><b>123006</b>    <span class="k">if</span>( !<span class="m">OMIT_TEMPDB</span> &amp;&amp; isTemp ) iDb = <span class="n">1</span>;</div>
<div class="l"><b>123007</b>    zName = <span class="f">sqlite3NameFromToken</span>(db, pName);</div>
<div class="l"><b>123008</b>    <span class="k">if</span>( <span class="m">IN_RENAME_OBJECT</span> ){</div>
<div class="l"><b>123009</b>      <span class="f">sqlite3RenameTokenMap</span>(pParse, (<span class="k">void</span>*)zName, pName);</div>
<div class="l"><b>123010</b>    }</div>
<div class="l"><b>123011</b>  }</div>
<div class="l"><b>123012</b>  pParse-&gt;<span class="v">sNameToken</span> = *pName;</div>
<div class="l"><b>123013</b>  <span class="k">if</span>( zName==<span class="n">0</span> ) <span class="k">return</span>;</div>
<div class="l"><b>123014</b>  <span class="k">if</span>( <span class="f">sqlite3CheckObjectName</span>(pParse, zName, isView?<span class="s">"view"</span>:<span class="s">"table"</span>, zName) ){</div>
<div class="l"><b>123015</b>    <span class="k">goto</span> begin_table_error;</div>
</div>
<div class="db">■ ▢ ⇥ ⤓ ⤒ ▷ ◇ ■ sqlite_test 〉 ◉ Thread 1 〉 ▣ 0 sqlite3StartTable</div>
<div class="co">› <u></u><span class="nm">pParse</span> = (Parse *) 0x16fdfb4f8<br>› <u></u><span class="nm">pName1</span> = (Token *) 0x16fdfb2c0<br>› <u></u><span class="nm">pName2</span> = (Token *) 0x16fdfb2d8</div>
</div>

<div class="t" style="left:800px;top:450px">
<div class="pn"><div class="ic">▭▣⊞⌕⚠◇◆▭≡</div>
<div class="r" style="top:13px">▪ <b>sqlite_test</b> PID 87073<i class="dot"></i><i class="dot2"></i></div>
<div class="r" style="top:20px">◎ CPU<span>0%</span></div><div class="hr" style="top:27px"></div>
<div class="r" style="top:29px">▢ Memory<span>3.7 MB</span></div><div class="bar"></div><div class="hr" style="top:37px"></div>
<div class="r" style="top:38px">⚡ Energy Impact<span>Zero</span></div><div class="hr" style="top:46px"></div>
<div class="r" style="top:47px">▤ Disk<span>Zero KB/s</span></div><div class="hr" style="top:55px"></div>
<div class="r" style="top:56px">⊕ Network<span>Zero KB/s</span></div><div class="hr" style="top:64px"></div>
<div class="r" style="top:66px">▾ ◉ Thread 1 <em>Queue: com.apple.main-thread (serial)</em></div>
<div class="r rs" style="top:72px">0 sqlite3StartTable</div><div class="r rf" style="top:78px">1 yy_reduce</div><div class="r rf" style="top:84px">2 sqlite3Parser</div><div class="r rf" style="top:90px">3 sqlite3RunParser</div><div class="r rf" style="top:96px">4 sqlite3Prepare</div><div class="r rf" style="top:102px">5 sqlite3LockAndPrepare</div><div class="r rf" style="top:108px">6 sqlite3_prepare_v2</div><div class="r rf" style="top:114px">7 sqlite3_exec</div><div class="r rf" style="top:120px">8 main</div><div class="r rf" style="top:126px">9 start</div></div>
<div class="tb">▣ ‹ › <i>main</i><i>sqlite3</i><i class="on">sqlite3</i></div>
<div class="cr">▣ sqlite_test 〉 sqlite_test 〉 sqlite3 〉 sqlite3StartTable(Parse*, Token*, Token*, int, int, int, int)</div>
<div class="ed">
<div class="l"><b>49071</b><span class="k">static int</span> <span class="f">winRead</span>(</div>
<div class="l"><b>123034</b>  }</div>
<div class="l"><b>123035</b><span class="m">#endif</span></div>
<div class="l"><b>123036</b></div>
<div class="l"><b>123037</b>  <span class="c">/* Make sure the new table name does not collide with an existing</span></div>
<div class="l"><b>123038</b>  <span class="c">** index or table name in the same database.  Issue an error message if</span></div>
<div class="l"><b>123039</b>  <span class="c">** it does.  The exception is if the statement being parsed was passed</span></div>
<div class="l"><b>123040</b>  <span class="c">** to an sqlite3_declare_vtab() call. In that case only the column names</span></div>
<div class="l"><b>123041</b>  <span class="c">** and types will be used, so there is no need to test for namespace</span></div>
<div class="l"><b>123042</b>  <span class="c">** collisions.</span></div>
<div class="l"><b>123043</b>  <span class="c">*/</span></div>
<div class="l hl"><b>123044</b>  <span class="k">if</span>( !<span class="m">IN_SPECIAL_PARSE</span> ){<span class="g">Thread 1: step over</span></div>
<div class="l"><b>123045</b>    <span class="k">char</span> *zDb = db-&gt;<span class="v">aDb</span>[iDb].<span class="v">zDbSName</span>;</div>
<div class="l bp"><b>123046</b>    <span class="k">if</span>( <span class="m">SQLITE_OK</span>!=<span class="f">sqlite3ReadSchema</span>(pParse) ){</div>
<div class="l"><b>123047</b>      <span class="k">goto</span> begin_table_error;</div>
<div class="l"><b>123048</b>    }</div>
<div class="l"><b>123049</b>    pTable = <span class="f">sqlite3FindTable</span>(db, zName, zDb);</div>
<div class="l"><b>123050</b>    <span class="k">if</span>( pTable ){</div>
<div class="l"><b>123051</b>      <span class="k">if</span>( !noErr ){</div>
<div class="l"><b>123052</b>        <span class="f">sqlite3ErrorMsg</span>(pParse, <span class="s">"%s %T already exists"</span>,</div>
<div class="l"><b>123053</b>            (<span class="m">IsView</span>(pTable)? <span class="s">"view"</span> : <span class="s">"table"</span>), pName);</div>
<div class="l"><b>123054</b>      }<span class="k">else</span>{</div>
<div class="l"><b>123055</b>        assert( !db-&gt;<span class="v">init</span>.<span class="v">busy</span> || <span class="m">CORRUPT_DB</span> );</div>
<div class="l"><b>123056</b>        <span class="f">sqlite3CodeVerifySchema</span>(pParse, iDb);</div>
</div>
<div class="db">■ ▢ ⇥ ⤓ ⤒ ▷ ◇ ■ sqlite_test 〉 ◉ Thread 1 〉 ▣ 0 sqlite3StartTable</div>
<div class="co">› <u></u><span class="nm">pParse</span> = (Parse *) 0x16fdfb4f8<br>› <u></u><span class="nm">pName1</span> = (Token *) 0x16fdfb2c0<br>› <u></u><span class="nm">pName2</span> = (Token *) 0x16fdfb2d8</div>
</div>

<div class="t" style="left:1200px;top:450px">
<div class="pn"><div class="ic">▭▣⊞⌕⚠◇◆▭≡</div>
<div class="r" style="top:13px">▪ <b>sqlite_test</b> PID 87073<i class="dot"></i><i class="dot2"></i></div>
<div class="r" style="top:20px">◎ CPU<span>0%</span></div><div class="hr" style="top:27px"></div>
<div class="r" style="top:29px">▢ Memory<span>3.7 MB</span></div><div class="bar"></div><div class="hr" style="top:37px"></div>
<div class="r" style="top:38px">⚡ Energy Impact<span>Zero</span></div><div class="hr" style="top:46px"></div>
<div class="r" style="top:47px">▤ Disk<span>Zero KB/s</span></div><div class="hr" style="top:55px"></div>
<div class="r" style="top:56px">⊕ Network<span>Zero KB/s</span></div><div class="hr" style="top:64px"></div>
<div class="r" style="top:66px">▾ ◉ Thread 1 <em>Queue: com.apple.main-thread (serial)</em></div>
<div class="r rs" style="top:72px">0 sqlite3StartTable</div><div class="r rf" style="top:78px">1 yy_reduce</div><div class="r rf" style="top:84px">2 sqlite3Parser</div><div class="r rf" style="top:90px">3 sqlite3RunParser</div><div class="r rf" style="top:96px">4 sqlite3Prepare</div><div class="r rf" style="top:102px">5 sqlite3LockAndPrepare</div><div class="r rf" style="top:108px">6 sqlite3_prepare_v2</div><div class="r rf" style="top:114px">7 sqlite3_exec</div><div class="r rf" style="top:120px">8 main</div><div class="r rf" style="top:126px">9 start</div></div>
<div class="tb">▣ ‹ › <i>main</i><i>sqlite3</i><i class="on">sqlite3</i></div>
<div class="cr">▣ sqlite_test 〉 sqlite_test 〉 sqlite3 〉 sqlite3StartTable(Parse*, Token*, Token*, int, int, int, int)</div>
<div class="ed">
<div class="l"><b>49071</b><span class="k">static int</span> <span class="f">winRead</span>(</div>
<div class="l"><b>123038</b>  <span class="c">** index or table name in the same database.  Issue an error message if</span></div>
<div class="l"><b>123039</b>  <span class="c">** it does.  The exception is if the statement being parsed was passed</span></div>
<div class="l"><b>123040</b>  <span class="c">** to an sqlite3_declare_vtab() call. In that case only the column names</span></div>
<div class="l"><b>123041</b>  <span class="c">** and types will be used, so there is no need to test for namespace</span></div>
<div class="l"><b>123042</b>  <span class="c">** collisions.</span></div>
<div class="l"><b>123043</b>  <span class="c">*/</span></div>
<div class="l"><b>123044</b>  <span class="k">if</span>( !<span class="m">IN_SPECIAL_PARSE</span> ){</div>
<div class="l"><b>123045</b>    <span class="k">char</span> *zDb = db-&gt;<span class="v">aDb</span>[iDb].<span class="v">zDbSName</span>;</div>
<div class="l hl"><b>123046</b>    <span class="k">if</span>( <span class="m">SQLITE_OK</span>!=<span class="f">sqlite3ReadSchema</span>(pParse) ){<span class="g">Thread 1: breakpoint 23.1</span></div>
<div class="l"><b>123047</b>      <span class="k">goto</span> begin_table_error;</div>
<div class="l"><b>123048</b>    }</div>
<div class="l"><b>123049</b>    pTable = <span class="f">sqlite3FindTable</span>(db, zName, zDb);</div>
<div class="l"><b>123050</b>    <span class="k">if</span>( pTable ){</div>
<div class="l"><b>123051</b>      <span class="k">if</span>( !noErr ){</div>
<div class="l"><b>123052</b>        <span class="f">sqlite3ErrorMsg</span>(pParse, <span class="s">"%s %T already exists"</span>,</div>
<div class="l"><b>123053</b>            (<span class="m">IsView</span>(pTable)? <span class="s">"view"</span> : <span class="s">"table"</span>), pName);</div>
<div class="l"><b>123054</b>      }<span class="k">else</span>{</div>
<div class="l"><b>123055</b>        assert( !db-&gt;<span class="v">init</span>.<span class="v">busy</span> || <span class="m">CORRUPT_DB</span> );</div>
<div class="l"><b>123056</b>        <span class="f">sqlite3CodeVerifySchema</span>(pParse, iDb);</div>
<div class="l"><b>123057</b>        <span class="f">sqlite3ForceNotReadOnly</span>(pParse);</div>
<div class="l"><b>123058</b>      }</div>
<div class="l"><b>123059</b>      <span class="k">goto</span> begin_table_error;</div>
<div class="l"><b>123060</b>    }</div>
<div class="l"><b>123061</b>    <span class="k">if</span>( <span class="f">sqlite3FindIndex</span>(db, zName, zDb)!=<span class="n">0</span> ){</div>
</div>
<div class="db">■ ▢ ⇥ ⤓ ⤒ ▷ ◇ ■ sqlite_test 〉 ◉ Thread 1 〉 ▣ 0 sqlite3StartTable</div>
<div class="co">› <u></u><span class="nm">pParse</span> = (Parse *) 0x16fdfb4f8<br>› <u></u><span class="nm">pName1</span> = (Token *) 0x16fdfb2c0<br>› <u></u><span class="nm">pName2</span> = (Token *) 0x16fdfb2d8</div>
</div>

<!-- ROW 4 -->
<div class="t" style="left:0;top:675px">
<div class="pn"><div class="ic">▭▣⊞⌕⚠◇◆▭≡</div>
<div class="r" style="top:13px">▪ <b>sqlite_test</b> PID 87073<i class="dot"></i><i class="dot2"></i></div>
<div class="r" style="top:20px">◎ CPU<span>0%</span></div><div class="hr" style="top:27px"></div>
<div class="r" style="top:29px">▢ Memory<span>3.7 MB</span></div><div class="bar"></div><div class="hr" style="top:37px"></div>
<div class="r" style="top:38px">⚡ Energy Impact<span>Zero</span></div><div class="hr" style="top:46px"></div>
<div class="r" style="top:47px">▤ Disk<span>Zero KB/s</span></div><div class="hr" style="top:55px"></div>
<div class="r" style="top:56px">⊕ Network<span>Zero KB/s</span></div><div class="hr" style="top:64px"></div>
<div class="r" style="top:66px">▾ ◉ Thread 1 <em>Queue: com.apple.main-thread (serial)</em></div>
<div class="r rs" style="top:72px">0 sqlite3ReadSchema</div><div class="r rf" style="top:78px">1 sqlite3StartTable</div><div class="r rf" style="top:84px">2 yy_reduce</div><div class="r rf" style="top:90px">3 sqlite3Parser</div><div class="r rf" style="top:96px">4 sqlite3RunParser</div><div class="r rf" style="top:102px">5 sqlite3Prepare</div><div class="r rf" style="top:108px">6 sqlite3LockAndPrepare</div><div class="r rf" style="top:114px">7 sqlite3_prepare_v2</div><div class="r rf" style="top:120px">8 sqlite3_exec</div><div class="r rf" style="top:126px">9 main</div><div class="r rf" style="top:132px">10 start</div></div>
<div class="tb">▣ ‹ › <i>main</i><i>sqlite3</i><i class="on">sqlite3</i></div>
<div class="cr">▣ sqlite_test 〉 sqlite_test 〉 sqlite3 〉 sqlite3ReadSchema(Parse*)</div>
<div class="ed">
<div class="l"><b>49071</b><span class="k">static int</span> <span class="f">winRead</span>(</div>
<div class="l"><b>142262</b>  }</div>
<div class="l"><b>142263</b>  <span class="k">return</span> <span class="m">SQLITE_OK</span>;</div>
<div class="l"><b>142264</b>}</div>
<div class="l"><b>142265</b></div>
<div class="l"><b>142266</b><span class="c">/*</span></div>
<div class="l"><b>142267</b><span class="c">** This routine is a no-op if the database schema is already initialized.</span></div>
<div class="l"><b>142268</b><span class="c">** Otherwise, the schema is loaded. An error code is returned.</span></div>
<div class="l"><b>142269</b><span class="c">*/</span></div>
<div class="l"><b>142270</b><span class="m">SQLITE_PRIVATE</span> <span class="k">int</span> <span class="f">sqlite3ReadSchema</span>(Parse *pParse){</div>
<div class="l bp"><b>142271</b>  <span class="k">int</span> rc = <span class="m">SQLITE_OK</span>;</div>
<div class="l"><b>142272</b>  sqlite3 *db = pParse-&gt;<span class="v">db</span>;</div>
<div class="l"><b>142273</b>  assert( <span class="f">sqlite3_mutex_held</span>(db-&gt;<span class="v">mutex</span>) );</div>
<div class="l"><b>142274</b>  <span class="k">if</span>( !db-&gt;<span class="v">init</span>.<span class="v">busy</span> ){</div>
<div class="l hl"><b>142275</b>    rc = <span class="f">sqlite3Init</span>(db, &amp;pParse-&gt;<span class="v">zErrMsg</span>);<span class="g">Thread 1: step over</span></div>
<div class="l"><b>142276</b>    <span class="k">if</span>( rc!=<span class="m">SQLITE_OK</span> ){</div>
<div class="l"><b>142277</b>      pParse-&gt;<span class="v">rc</span> = rc;</div>
<div class="l"><b>142278</b>      pParse-&gt;<span class="v">nErr</span>++;</div>
<div class="l"><b>142279</b>    }<span class="k">else if</span>( db-&gt;<span class="v">noSharedCache</span> ){</div>
<div class="l"><b>142280</b>      db-&gt;<span class="v">mDbFlags</span> |= <span class="m">DBFLAG_SchemaKnownOk</span>;</div>
<div class="l"><b>142281</b>    }</div>
<div class="l"><b>142282</b>  }</div>
<div class="l"><b>142283</b>  <span class="k">return</span> rc;</div>
<div class="l"><b>142284</b>}</div>
</div>
<div class="db">■ ▢ ⇥ ⤓ ⤒ ▷ ◇ ■ sqlite_test 〉 ◉ Thread 1 〉 ▣ 0 sqlite3ReadSchema</div>
<div class="co">› <u></u><span class="nm">pParse</span> = (Parse *) 0x16fdfb4f8<br>› <u></u><span class="nm">rc</span> = (int) 0<br>› <u></u><span class="nm">db</span> = (sqlite3 *) 0x10053d400</div>
</div>

<div class="t" style="left:400px;top:675px">
<div class="pn"><div class="ic">▭▣⊞⌕⚠◇◆▭≡</div>
<div class="r" style="top:13px">▪ <b>sqlite_test</b> PID 87073<i class="dot"></i><i class="dot2"></i></div>
<div class="r" style="top:20px">◎ CPU<span>0%</span></div><div class="hr" style="top:27px"></div>
<div class="r" style="top:29px">▢ Memory<span>3.7 MB</span></div><div class="bar"></div><div class="hr" style="top:37px"></div>
<div class="r" style="top:38px">⚡ Energy Impact<span>Zero</span></div><div class="hr" style="top:46px"></div>
<div class="r" style="top:47px">▤ Disk<span>Zero KB/s</span></div><div class="hr" style="top:55px"></div>
<div class="r" style="top:56px">⊕ Network<span>Zero KB/s</span></div><div class="hr" style="top:64px"></div>
<div class="r" style="top:66px">▾ ◉ Thread 1 <em>Queue: com.apple.main-thread (serial)</em></div>
<div class="r rs" style="top:72px">0 sqlite3InitOne</div><div class="r rf" style="top:78px">1 sqlite3Init</div><div class="r rf" style="top:84px">2 sqlite3ReadSchema</div><div class="r rf" style="top:90px">3 sqlite3StartTable</div><div class="r rf" style="top:96px">4 yy_reduce</div><div class="r rf" style="top:102px">5 sqlite3Parser</div><div class="r rf" style="top:108px">6 sqlite3RunParser</div><div class="r rf" style="top:114px">7 sqlite3Prepare</div><div class="r rf" style="top:120px">8 sqlite3_prepare_v2</div><div class="r rf" style="top:126px">9 sqlite3_exec</div><div class="r rf" style="top:132px">10 main</div><div class="r rf" style="top:138px">11 start</div></div>
<div class="tb">▣ ‹ › <i>main</i><i>sqlite3</i><i class="on">sqlite3</i></div>
<div class="cr">▣ sqlite_test 〉 sqlite_test 〉 sqlite3 〉 sqlite3InitOne(sqlite3*, int, char**, u32)</div>
<div class="ed">
<div class="l"><b>49071</b><span class="k">static int</span> <span class="f">winRead</span>(</div>
<div class="l"><b>141985</b><span class="c">*/</span></div>
<div class="l"><b>141986</b><span class="m">SQLITE_PRIVATE</span> <span class="k">int</span> <span class="f">sqlite3InitOne</span>(sqlite3 *db, <span class="k">int</span> iDb, <span class="k">char</span> **pzErrMsg, u32</div>
<div class="l"><b>141987</b>    mFlags){</div>
<div class="l"><b>141988</b>  <span class="k">int</span> rc;</div>
<div class="l"><b>141989</b>  <span class="k">int</span> i;</div>
<div class="l"><b>141990</b><span class="m">#ifndef SQLITE_OMIT_DEPRECATED</span></div>
<div class="l"><b>141991</b>  <span class="k">int</span> size;</div>
<div class="l"><b>141992</b><span class="m">#endif</span></div>
<div class="l"><b>141993</b>  Db *pDb;</div>
<div class="l"><b>141994</b>  <span class="k">char const</span> *azArg[<span class="n">6</span>];</div>
<div class="l"><b>141995</b>  <span class="k">int</span> meta[<span class="n">5</span>];</div>
<div class="l"><b>141996</b>  InitData initData;</div>
<div class="l"><b>141997</b>  <span class="k">const char</span> *zSchemaTabName;</div>
<div class="l sl"><b>141998</b>  <span class="k">int</span> openedTransaction = <span class="n">0</span>;</div>
<div class="l"><b>141999</b>  <span class="k">int</span> mask = ((db-&gt;<span class="v">mDbFlags</span> &amp; <span class="m">DBFLAG_EncodingFixed</span>) | ~<span class="m">DBFLAG_EncodingFixed</span>);</div>
<div class="l"><b>142000</b></div>
<div class="l"><b>142001</b>  assert( (db-&gt;<span class="v">mDbFlags</span> &amp; <span class="m">DBFLAG_SchemaKnownOk</span>)==<span class="n">0</span> );</div>
<div class="l"><b>142002</b>  assert( iDb&gt;=<span class="n">0</span> &amp;&amp; iDb&lt;db-&gt;<span class="v">nDb</span> );</div>
<div class="l"><b>142003</b>  assert( db-&gt;<span class="v">aDb</span>[iDb].<span class="v">pSchema</span> );</div>
<div class="l"><b>142004</b>  assert( <span class="f">sqlite3_mutex_held</span>(db-&gt;<span class="v">mutex</span>) );</div>
<div class="l"><b>142005</b>  assert( iDb==<span class="n">1</span> || <span class="f">sqlite3BtreeHoldsMutex</span>(db-&gt;<span class="v">aDb</span>[iDb].<span class="v">pBt</span>) );</div>
<div class="l"><b>142006</b></div>
<div class="l"><b>142007</b></div>
<div class="l hl"><b>142008</b>  db-&gt;<span class="v">init</span>.<span class="v">busy</span> = <span class="n">1</span>;<span class="g">Thread 1: step over</span></div>
</div>
<div class="db">■ ▢ ⇥ ⤓ ⤒ ▷ ◇ ■ sqlite_test 〉 ◉ Thread 1 〉 ▣ 0 sqlite3InitOne</div>
<div class="co">› <u></u><span class="nm">db</span> = (sqlite3 *) 0x10053d400<br>› <u></u><span class="nm">iDb</span> = (int) 0<br>› <u></u><span class="nm">pzErrMsg</span> = (char **) 0x16fdfb500</div>
</div>

<div class="t" style="left:800px;top:675px">
<div class="pn"><div class="ic">▭▣⊞⌕⚠◇◆▭≡</div>
<div class="r" style="top:13px">▪ <b>sqlite_test</b> PID 87073<i class="dot"></i><i class="dot2"></i></div>
<div class="r" style="top:20px">◎ CPU<span>0%</span></div><div class="hr" style="top:27px"></div>
<div class="r" style="top:29px">▢ Memory<span>3.7 MB</span></div><div class="bar"></div><div class="hr" style="top:37px"></div>
<div class="r" style="top:38px">⚡ Energy Impact<span>Zero</span></div><div class="hr" style="top:46px"></div>
<div class="r" style="top:47px">▤ Disk<span>Zero KB/s</span></div><div class="hr" style="top:55px"></div>
<div class="r" style="top:56px">⊕ Network<span>Zero KB/s</span></div><div class="hr" style="top:64px"></div>
<div class="r" style="top:66px">▾ ◉ Thread 1 <em>Queue: com.apple.main-thread (serial)</em></div>
<div class="r rs" style="top:72px">0 sqlite3InitOne</div><div class="r rf" style="top:78px">1 sqlite3Init</div><div class="r rf" style="top:84px">2 sqlite3ReadSchema</div><div class="r rf" style="top:90px">3 sqlite3StartTable</div><div class="r rf" style="top:96px">4 yy_reduce</div><div class="r rf" style="top:102px">5 sqlite3Parser</div><div class="r rf" style="top:108px">6 sqlite3RunParser</div><div class="r rf" style="top:114px">7 sqlite3Prepare</div><div class="r rf" style="top:120px">8 sqlite3_prepare_v2</div><div class="r rf" style="top:126px">9 sqlite3_exec</div><div class="r rf" style="top:132px">10 main</div><div class="r rf" style="top:138px">11 start</div></div>
<div class="tb">▣ ‹ › <i>main</i><i>sqlite3</i><i class="on">sqlite3</i></div>
<div class="cr">▣ sqlite_test 〉 sqlite_test 〉 sqlite3 〉 sqlite3InitOne(sqlite3*, int, char**, u32)</div>
<div class="ed">
<div class="l"><b>49071</b><span class="k">static int</span> <span class="f">winRead</span>(</div>
<div class="l"><b>142011</b>  <span class="c">/* Construct the in-memory representation schema tables (sqlite_schema or</span></div>
<div class="l"><b>142012</b>  <span class="c">** sqlite_temp_schema) by invoking the parser directly.  The appropriate</span></div>
<div class="l"><b>142013</b>  <span class="c">** table name will be inserted automatically by the parser so we can just</span></div>
<div class="l"><b>142014</b>  <span class="c">** use the abbreviation "x" here.  The parser will also automatically tag</span></div>
<div class="l"><b>142015</b>  <span class="c">** the schema table as read-only. */</span></div>
<div class="l"><b>142016</b>  azArg[<span class="n">0</span>] = <span class="s">"table"</span>;</div>
<div class="l sl"><b>142017</b>  azArg[<span class="n">1</span>] = zSchemaTabName = <span class="m">SCHEMA_TABLE</span>(iDb);</div>
<div class="l"><b>142018</b>  azArg[<span class="n">2</span>] = azArg[<span class="n">1</span>];</div>
<div class="l"><b>142019</b>  azArg[<span class="n">3</span>] = <span class="s">"1"</span>;</div>
<div class="l hl"><b>142020</b>  azArg[<span class="n">4</span>] = <span class="s">"CREATE TABLE x(type text,name text,tbl_name text,"</span><span class="g">Thread 1: step over</span></div>
<div class="l"><b>142021</b>                            <span class="s">"rootpage int,sql text)"</span>;</div>
<div class="l"><b>142022</b>  azArg[<span class="n">5</span>] = <span class="n">0</span>;</div>
<div class="l"><b>142023</b>  initData.<span class="v">db</span> = db;</div>
<div class="l"><b>142024</b>  initData.<span class="v">iDb</span> = iDb;</div>
<div class="l"><b>142025</b>  initData.<span class="v">rc</span> = <span class="m">SQLITE_OK</span>;</div>
<div class="l"><b>142026</b>  initData.<span class="v">pzErrMsg</span> = pzErrMsg;</div>
<div class="l"><b>142027</b>  initData.<span class="v">mInitFlags</span> = mFlags;</div>
<div class="l"><b>142028</b>  initData.<span class="v">nInitRow</span> = <span class="n">0</span>;</div>
<div class="l"><b>142029</b>  initData.<span class="v">mxPage</span> = <span class="n">0</span>;</div>
<div class="l bp"><b>142030</b>  <span class="f">sqlite3InitCallback</span>(&amp;initData, <span class="n">5</span>, (<span class="k">char</span> **)azArg, <span class="n">0</span>);</div>
<div class="l"><b>142031</b>  db-&gt;<span class="v">mDbFlags</span> &amp;= mask;</div>
<div class="l"><b>142032</b>  <span class="k">if</span>( initData.<span class="v">rc</span> ){</div>
<div class="l"><b>142033</b>    rc = initData.<span class="v">rc</span>;</div>
<div class="l"><b>142034</b>    <span class="k">goto</span> error_out;</div>
</div>
<div class="db">■ ▢ ⇥ ⤓ ⤒ ▷ ◇ ■ sqlite_test 〉 ◉ Thread 1 〉 ▣ 0 sqlite3InitOne</div>
<div class="co">› <u></u><span class="nm">db</span> = (sqlite3 *) 0x10053d400<br>› <u></u><span class="nm">iDb</span> = (int) 0<br>› <u></u><span class="nm">zSchemaTabName</span> = (const char *) "sqlite_master"</div>
</div>

<div class="t" style="left:1200px;top:675px">
<div class="pn"><div class="ic">▭▣⊞⌕⚠◇◆▭≡</div>
<div class="r" style="top:13px">▪ <b>sqlite_test</b> PID 87073<i class="dot"></i><i class="dot2"></i></div>
<div class="r" style="top:20px">◎ CPU<span>0%</span></div><div class="hr" style="top:27px"></div>
<div class="r" style="top:29px">▢ Memory<span>3.7 MB</span></div><div class="bar"></div><div class="hr" style="top:37px"></div>
<div class="r" style="top:38px">⚡ Energy Impact<span>Zero</span></div><div class="hr" style="top:46px"></div>
<div class="r" style="top:47px">▤ Disk<span>Zero KB/s</span></div><div class="hr" style="top:55px"></div>
<div class="r" style="top:56px">⊕ Network<span>Zero KB/s</span></div><div class="hr" style="top:64px"></div>
<div class="r" style="top:66px">▾ ◉ Thread 1 <em>Queue: com.apple.main-thread (serial)</em></div>
<div class="r rs" style="top:72px">0 sqlite3InitOne</div><div class="r rf" style="top:78px">1 sqlite3Init</div><div class="r rf" style="top:84px">2 sqlite3ReadSchema</div><div class="r rf" style="top:90px">3 sqlite3StartTable</div><div class="r rf" style="top:96px">4 yy_reduce</div><div class="r rf" style="top:102px">5 sqlite3Parser</div><div class="r rf" style="top:108px">6 sqlite3RunParser</div><div class="r rf" style="top:114px">7 sqlite3Prepare</div><div class="r rf" style="top:120px">8 sqlite3_prepare_v2</div><div class="r rf" style="top:126px">9 sqlite3_exec</div><div class="r rf" style="top:132px">10 main</div><div class="r rf" style="top:138px">11 start</div></div>
<div class="tb">▣ ‹ › <i>main</i><i>sqlite3</i><i class="on">sqlite3</i></div>
<div class="cr">▣ sqlite_test 〉 sqlite_test 〉 sqlite3 〉 sqlite3InitOne(sqlite3*, int, char**, u32)</div>
<div class="ed">
<div class="l"><b>49071</b><span class="k">static int</span> <span class="f">winRead</span>(</div>
<div class="l"><b>142012</b>  <span class="c">** sqlite_temp_schema) by invoking the parser directly.  The appropriate</span></div>
<div class="l"><b>142013</b>  <span class="c">** table name will be inserted automatically by the parser so we can just</span></div>
<div class="l"><b>142014</b>  <span class="c">** use the abbreviation "x" here.  The parser will also automatically tag</span></div>
<div class="l"><b>142015</b>  <span class="c">** the schema table as read-only. */</span></div>
<div class="l"><b>142016</b>  azArg[<span class="n">0</span>] = <span class="s">"table"</span>;</div>
<div class="l"><b>142017</b>  azArg[<span class="n">1</span>] = zSchemaTabName = <span class="m">SCHEMA_TABLE</span>(iDb);</div>
<div class="l"><b>142018</b>  azArg[<span class="n">2</span>] = azArg[<span class="n">1</span>];</div>
<div class="l"><b>142019</b>  azArg[<span class="n">3</span>] = <span class="s">"1"</span>;</div>
<div class="l bp"><b>142020</b>  azArg[<span class="n">4</span>] = <span class="s">"CREATE TABLE x(type text,name text,tbl_name text,"</span></div>
<div class="l"><b>142021</b>                            <span class="s">"rootpage int,sql text)"</span>;</div>
<div class="l hl"><b>142022</b>  azArg[<span class="n">5</span>] = <span class="n">0</span>;<span class="g">Thread 1: step over</span></div>
<div class="l"><b>142023</b>  initData.<span class="v">db</span> = db;</div>
<div class="l"><b>142024</b>  initData.<span class="v">iDb</span> = iDb;</div>
<div class="l"><b>142025</b>  initData.<span class="v">rc</span> = <span class="m">SQLITE_OK</span>;</div>
<div class="l"><b>142026</b>  initData.<span class="v">pzErrMsg</span> = pzErrMsg;</div>
<div class="l"><b>142027</b>  initData.<span class="v">mInitFlags</span> = mFlags;</div>
<div class="l"><b>142028</b>  initData.<span class="v">nInitRow</span> = <span class="n">0</span>;</div>
<div class="l"><b>142029</b>  initData.<span class="v">mxPage</span> = <span class="n">0</span>;</div>
<div class="l bp"><b>142030</b>  <span class="f">sqlite3InitCallback</span>(&amp;initData, <span class="n">5</span>, (<span class="k">char</span> **)azArg, <span class="n">0</span>);</div>
<div class="l"><b>142031</b>  db-&gt;<span class="v">mDbFlags</span> &amp;= mask;</div>
<div class="l"><b>142032</b>  <span class="k">if</span>( initData.<span class="v">rc</span> ){</div>
<div class="l"><b>142033</b>    rc = initData.<span class="v">rc</span>;</div>
<div class="l"><b>142034</b>    <span class="k">goto</span> error_out;</div>
<div class="l"><b>142035</b>  }</div>
</div>
<div class="db">■ ▢ ⇥ ⤓ ⤒ ▷ ◇ ■ sqlite_test 〉 ◉ Thread 1 〉 ▣ 0 sqlite3InitOne</div>
<div class="co">› <u></u><span class="nm">db</span> = (sqlite3 *) 0x10053d400<br>› <u></u><span class="nm">iDb</span> = (int) 0<br>› <u></u><span class="nm">zSchemaTabName</span> = (const char *) "sqlite_master"</div>
</div>

</body></html>
